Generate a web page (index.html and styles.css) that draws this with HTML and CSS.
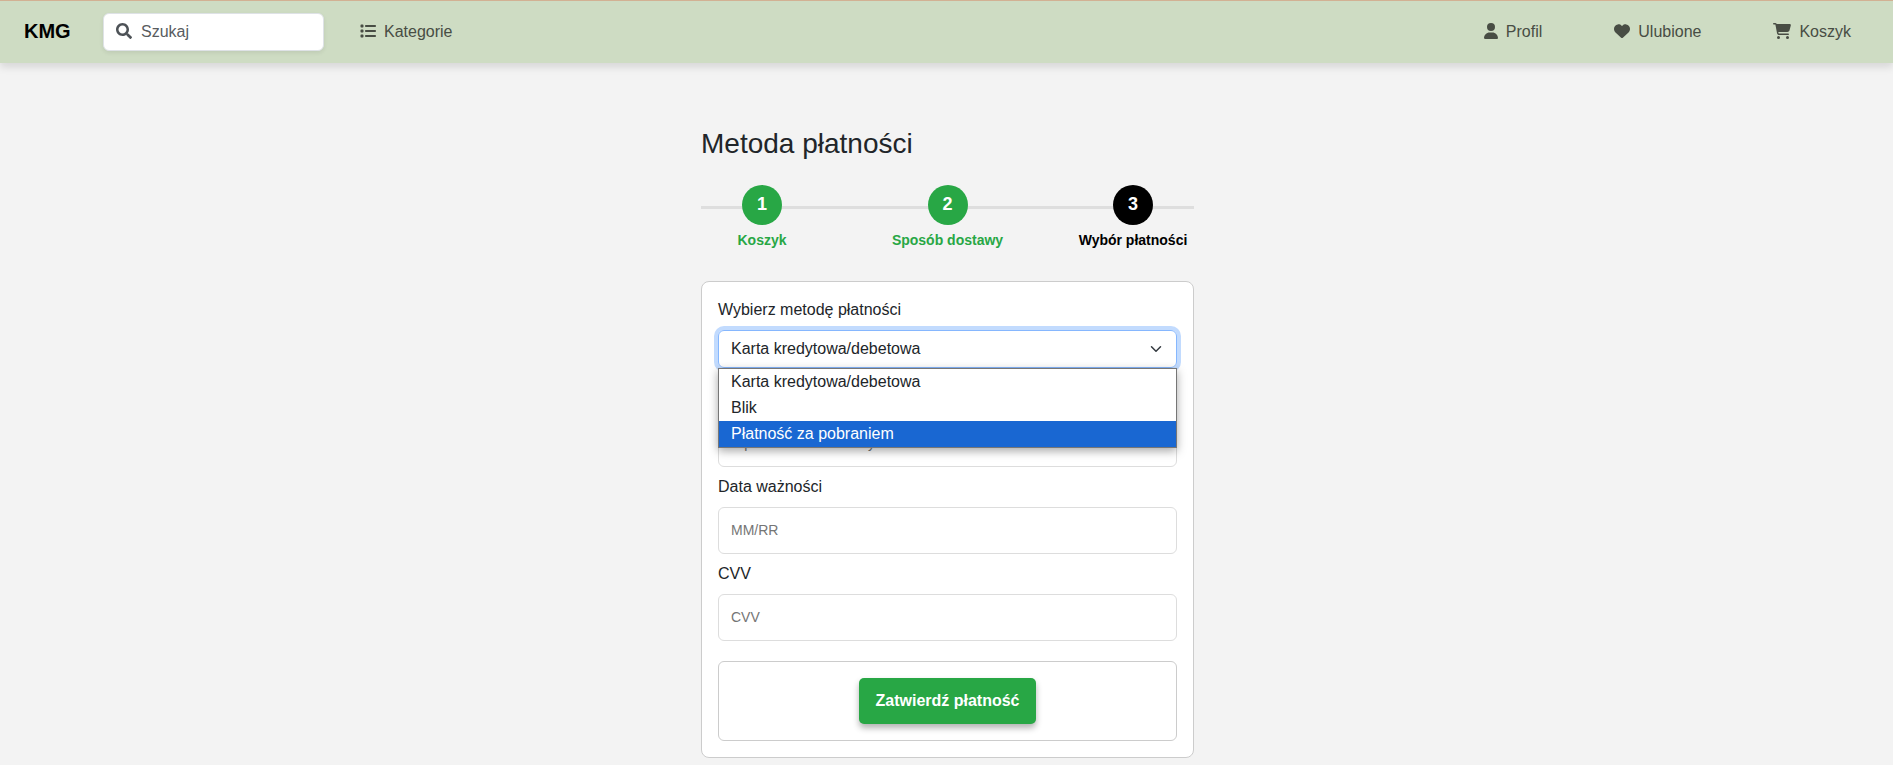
FILE: index.html
```html
<!DOCTYPE html>
<html lang="pl">
<head>
<meta charset="utf-8">
<title>KMG – Metoda płatności</title>
<link rel="stylesheet" href="styles.css">
</head>
<body>
<header class="navbar">
  <a class="brand">KMG</a>
  <div class="search">
    <svg class="icon" width="16" height="16" viewBox="0 0 512 512"><path d="M505 442.700L405.300 343c-4.500-4.500-10.600-7-17-7H372c27.600-35.300 44-79.700 44-128C416 93.100 322.900 0 208 0S0 93.100 0 208s93.100 208 208 208c48.300 0 92.700-16.400 128-44v16.300c0 6.400 2.500 12.500 7 17l99.700 99.700c9.400 9.400 24.600 9.400 33.900 0l28.300-28.300c9.400-9.400 9.400-24.600.1-34zM208 336c-70.700 0-128-57.200-128-128 0-70.700 57.200-128 128-128 70.700 0 128 57.200 128 128 0 70.700-57.200 128-128 128z"/></svg>
    <span class="nav-text">Szukaj</span>
  </div>
  <a class="nav-link">
    <svg class="icon" width="16" height="16" viewBox="0 0 512 512"><path d="M40 48C26.700 48 16 58.700 16 72v48c0 13.300 10.700 24 24 24H88c13.300 0 24-10.700 24-24V72c0-13.300-10.700-24-24-24H40zM192 64c-17.700 0-32 14.300-32 32s14.300 32 32 32H480c17.700 0 32-14.300 32-32s-14.300-32-32-32H192zm0 160c-17.700 0-32 14.300-32 32s14.300 32 32 32H480c17.700 0 32-14.300 32-32s-14.300-32-32-32H192zm0 160c-17.700 0-32 14.300-32 32s14.300 32 32 32H480c17.700 0 32-14.300 32-32s-14.300-32-32-32H192zM16 232v48c0 13.300 10.700 24 24 24H88c13.300 0 24-10.700 24-24V232c0-13.300-10.700-24-24-24H40c-13.300 0-24 10.700-24 24zM40 368c-13.300 0-24 10.700-24 24v48c0 13.300 10.700 24 24 24H88c13.300 0 24-10.700 24-24V392c0-13.300-10.700-24-24-24H40z"/></svg>
    <span class="nav-text">Kategorie</span>
  </a>
  <nav class="account">
    <a class="nav-link">
      <svg class="icon" width="14" height="16" viewBox="0 0 448 512"><path d="M224 256A128 128 0 1 0 224 0a128 128 0 1 0 0 256zm-45.700 48C79.800 304 0 383.800 0 482.300C0 498.700 13.300 512 29.700 512H418.300c16.400 0 29.700-13.300 29.700-29.700C448 383.800 368.200 304 269.700 304H178.300z"/></svg>
      <span class="nav-text">Profil</span>
    </a>
    <a class="nav-link">
      <svg class="icon" width="16" height="16" viewBox="0 0 512 512"><path d="M47.600 300.400L228.300 469.100c7.500 7 17.400 10.900 27.700 10.900s20.200-3.900 27.700-10.900L464.400 300.400c30.400-28.300 47.600-68 47.600-109.500v-5.800c0-69.900-50.500-129.500-119.400-141C347 36.500 300.600 51.400 268 84L256 96 244 84c-32.600-32.600-79-47.500-124.600-39.900C50.500 55.600 0 115.200 0 185.100v5.800c0 41.500 17.200 81.200 47.600 109.500z"/></svg>
      <span class="nav-text">Ulubione</span>
    </a>
    <a class="nav-link">
      <svg class="icon" width="18" height="16" viewBox="0 0 576 512"><path d="M0 24C0 10.700 10.700 0 24 0H69.500c22 0 41.500 12.800 50.600 32h411c26.300 0 45.500 25 38.600 50.400l-41 152.300c-8.500 31.400-37 53.300-69.500 53.300H170.700l5.400 28.500c2.200 11.300 12.100 19.500 23.600 19.500H488c13.300 0 24 10.700 24 24s-10.700 24-24 24H199.700c-34.600 0-64.300-24.600-70.700-58.500L77.400 54.500c-.7-3.800-4-6.500-7.900-6.500H24C10.700 48 0 37.300 0 24zM128 464a48 48 0 1 1 96 0 48 48 0 1 1-96 0zm336-48a48 48 0 1 1 0 96 48 48 0 1 1 0-96z"/></svg>
      <span class="nav-text">Koszyk</span>
    </a>
  </nav>
</header>

<main class="checkout">
  <h1 class="title">Metoda płatności</h1>
  <ol class="steps">
    <li class="step"><span class="step-number">1</span><span class="step-label">Koszyk</span></li>
    <li class="step"><span class="step-number">2</span><span class="step-label">Sposób dostawy</span></li>
    <li class="step step-current"><span class="step-number">3</span><span class="step-label">Wybór płatności</span></li>
  </ol>

  <form class="card">
    <label class="label">Wybierz metodę płatności</label>
    <div class="select">
      <span>Karta kredytowa/debetowa</span>
      <svg width="16" height="12" viewBox="0 0 16 16"><path fill="none" stroke="#343a40" stroke-linecap="round" stroke-linejoin="round" stroke-width="2" d="m2 5 6 6 6-6"/></svg>
      <ul class="options">
        <li class="option">Karta kredytowa/debetowa</li>
        <li class="option">Blik</li>
        <li class="option option-active">Płatność za pobraniem</li>
      </ul>
    </div>
    <label class="label">&nbsp;</label>
    <input class="input" type="text" placeholder="Wprowadź numer karty">
    <label class="label">Data ważności</label>
    <input class="input" type="text" placeholder="MM/RR">
    <label class="label">CVV</label>
    <input class="input" type="text" placeholder="CVV">
    <div class="actions"><button class="submit" type="button">Zatwierdź płatność</button></div>
  </form>
</main>
</body>
</html>
```
FILE: styles.css
```css
* { box-sizing: border-box; }

body {
  margin: 0;
  height: 765px;
  overflow: hidden;
  background: #f3f3f3;
  color: #212529;
  font: 16px/24px "Liberation Sans", Arial, sans-serif;
}

.navbar {
  display: flex;
  align-items: center;
  height: 63px;
  padding: 0 42px 0 24px;
  border-top: 1px solid #d2b193;
  background: #cedcc3;
  box-shadow: 0 4px 8px rgba(0, 0, 0, 0.12);
}

.brand {
  width: 79px;
  padding-bottom: 2px;
  color: #000;
  font-size: 20px;
  font-weight: bold;
}

.search {
  display: flex;
  align-items: center;
  gap: 9px;
  width: 221px;
  height: 38px;
  margin-right: 36px;
  padding: 0 0 2px 12px;
  border: 1px solid #dee2e6;
  border-radius: 6px;
  background: #fff;
  color: #595c5f;
  box-shadow: 0 2px 4px rgba(0, 0, 0, 0.075);
}

.nav-link {
  display: flex;
  align-items: center;
  gap: 8px;
  padding-bottom: 2px;
  color: #484d44;
}

.nav-text { padding-top: 2px; }

.icon { display: block; fill: currentColor; }
.search .icon { fill: #4d5257; }

.account {
  display: flex;
  gap: 72px;
  margin-left: auto;
}

.checkout {
  width: 495px;
  margin: 0 auto;
  padding: 64px 0 0 2px;
}

.title {
  margin: 0 0 24px;
  font-size: 28px;
  font-weight: normal;
  line-height: 34px;
}

.steps {
  display: flex;
  justify-content: space-between;
  margin: 0 0 30px;
  padding: 0;
  list-style: none;
  background: linear-gradient(#dedede, #dedede) 0 21px / 100% 3px no-repeat;
}

.step {
  display: flex;
  flex-direction: column;
  align-items: center;
  gap: 5px;
  width: 122px;
  color: #28a745;
  font-weight: bold;
}

.step-number {
  width: 40px;
  height: 40px;
  border-radius: 50%;
  background: #28a745;
  color: #fff;
  font-size: 18px;
  line-height: 38px;
  text-align: center;
}

.step-label { font-size: 14px; line-height: 21px; }
.step-current { color: #000; }
.step-current .step-number { background: #000; }

.card {
  display: flex;
  flex-direction: column;
  padding: 16px;
  border: 1px solid #ccc;
  border-radius: 8px;
  background: #fff;
}

.label { margin-bottom: 8px; }

.select {
  position: relative;
  display: flex;
  align-items: center;
  justify-content: space-between;
  height: 38px;
  margin-bottom: 20px;
  padding: 0 12px;
  border: 1px solid #86b7fe;
  border-radius: 6px;
  box-shadow: 0 0 0 4px #c2dbfe;
}

/* Open list lies over the fields below the select */
.options {
  position: absolute;
  top: 37px;
  left: -1px;
  right: -1px;
  margin: 0;
  padding: 0;
  border: 1px solid #767676;
  background: #fff;
  list-style: none;
  box-shadow: 0 3px 9px rgba(0, 0, 0, 0.35);
}

.option { padding: 0 12px; line-height: 26px; }
.option-active { background: #1967d2; color: #fff; }

.input {
  height: 47px;
  margin: 0 0 8px;
  padding: 0 12px 2px;
  border: 1px solid #ddd;
  border-radius: 6px;
  background: #fff;
  font: 14px "Liberation Sans", Arial, sans-serif;
}

.input::placeholder { color: #757575; }

.actions {
  display: flex;
  justify-content: center;
  margin-top: 12px;
  padding: 16px;
  border: 1px solid #ccc;
  border-radius: 6px;
}

.submit {
  width: 177px;
  height: 46px;
  padding: 0;
  border: 0;
  border-radius: 5px;
  background: #28a745;
  color: #fff;
  font: bold 16px "Liberation Sans", Arial, sans-serif;
  box-shadow: 0 4px 6px rgba(0, 0, 0, 0.3);
}
```
